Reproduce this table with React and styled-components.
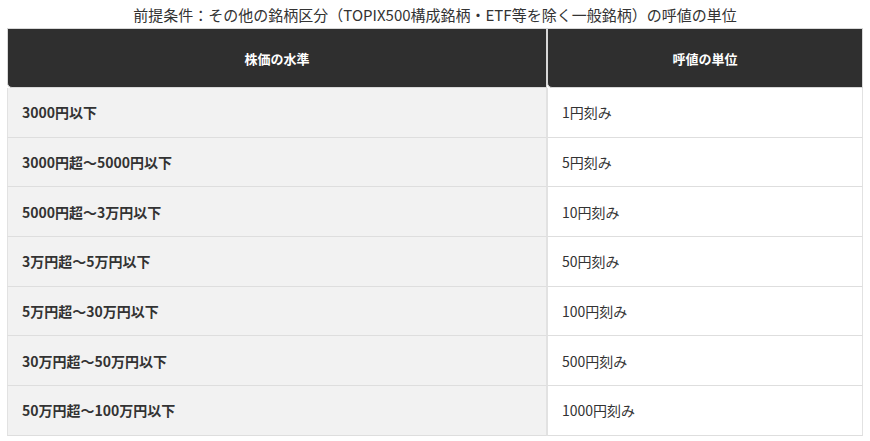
import React from 'react'
import styled, { createGlobalStyle } from 'styled-components'

const GlobalStyle = createGlobalStyle`
  body {
    margin: 0;
    background: #ffffff;
    font-family: "Noto Sans CJK JP", "Noto Sans", sans-serif;
    color: #333333;
  }
`

const rows = [
  ['3000円以下', '1円刻み'],
  ['3000円超～5000円以下', '5円刻み'],
  ['5000円超～3万円以下', '10円刻み'],
  ['3万円超～5万円以下', '50円刻み'],
  ['5万円超～30万円以下', '100円刻み'],
  ['30万円超～50万円以下', '500円刻み'],
  ['50万円超～100万円以下', '1000円刻み'],
]

const App = () => {
  return (
    <>
      <GlobalStyle />
      <Wrapper>
        <Table>
          <Caption>前提条件：その他の銘柄区分（TOPIX500構成銘柄・ETF等を除く一般銘柄）の呼値の単位</Caption>
          <thead>
            <tr>
              <Th $w="540px">株価の水準</Th>
              <Th>呼値の単位</Th>
            </tr>
          </thead>
          <tbody>
            {rows.map(([level, unit]) => (
              <tr key={level}>
                <Td $head>{level}</Td>
                <Td>{unit}</Td>
              </tr>
            ))}
          </tbody>
        </Table>
      </Wrapper>
    </>
  )
}

export default App

const Wrapper = styled.div`
  padding: 0 7px;
`
const Table = styled.table`
  width: 856px;
  border-collapse: separate;
  border-spacing: 0;
  table-layout: fixed;
`
const Caption = styled.caption`
  height: 28px;
  line-height: 30px;
  font-size: 15px;
  color: #333333;
  text-align: center;
`
const Th = styled.th`
  width: ${p => p.$w || 'auto'};
  height: 60px;
  box-sizing: border-box;
  background: #2f2f2f;
  color: #ffffff;
  font-size: 13px;
  font-weight: 700;
  text-align: center;
  border: 1px solid #d8d8d8;
  border-bottom-left-radius: 5px;
  padding: 0;
`
const Td = styled.td`
  height: 49.7px;
  box-sizing: border-box;
  padding: 0 0 0 14px;
  font-size: 14px;
  font-weight: ${p => (p.$head ? 700 : 400)};
  background: ${p => (p.$head ? '#f2f2f2' : '#ffffff')};
  color: #333333;
  border-left: 1px solid #e2e2e2;
  border-right: 1px solid #e2e2e2;
  border-bottom: 1px solid #dedede;
`
